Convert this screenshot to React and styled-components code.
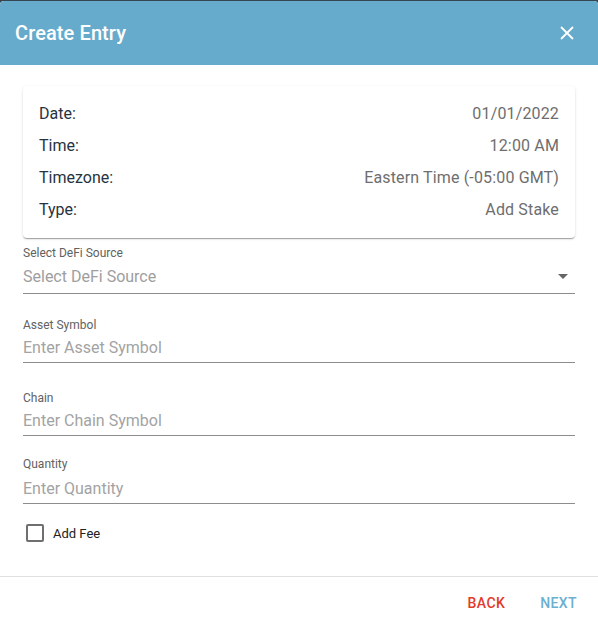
import React, { useState } from "react";
import styled, { createGlobalStyle } from "styled-components";

const GlobalStyle = createGlobalStyle`
  body {
    margin: 0;
    background: #36454f;
    font-family: Roboto, "Liberation Sans", sans-serif;
  }
`;

const details = [
  { label: "Date:", value: "01/01/2022" },
  { label: "Time:", value: "12:00 AM" },
  { label: "Timezone:", value: "Eastern Time (-05:00 GMT)" },
  { label: "Type:", value: "Add Stake" },
];

const fields = [
  { label: "Asset Symbol", placeholder: "Enter Asset Symbol", top: 24, h: 31 },
  { label: "Chain", placeholder: "Enter Chain Symbol", top: 28, h: 31 },
  { label: "Quantity", placeholder: "Enter Quantity", top: 21, h: 33 },
];

const App = () => {
  const [fee, setFee] = useState(false);

  return (
    <>
      <GlobalStyle />
      <Dialog>
        <Header>
          <h2>Create Entry</h2>
          <CloseButton aria-label="close">
            <svg width="16" height="16" viewBox="0 0 16 16">
              <path d="M2 2L14 14M14 2L2 14" stroke="#fff" strokeWidth="1.8" />
            </svg>
          </CloseButton>
        </Header>

        <Body>
          <SummaryCard>
            {details.map((d) => (
              <SummaryRow key={d.label}>
                <span className="label">{d.label}</span>
                <span className="value">{d.value}</span>
              </SummaryRow>
            ))}
          </SummaryCard>

          <Field top={8}>
            <FieldLabel>Select DeFi Source</FieldLabel>
            <SelectBox>
              <span>Select DeFi Source</span>
              <svg width="10" height="5" viewBox="0 0 10 5">
                <path d="M0 0L10 0L5 5Z" fill="#666" />
              </svg>
            </SelectBox>
          </Field>

          {fields.map((f) => (
            <Field key={f.label} top={f.top}>
              <FieldLabel>{f.label}</FieldLabel>
              <TextInput h={f.h} placeholder={f.placeholder} />
            </Field>
          ))}

          <CheckRow onClick={() => setFee(!fee)}>
            <CheckBox checked={fee} />
            <span>Add Fee</span>
          </CheckRow>
        </Body>

        <Footer>
          <ActionButton color="#e23b2b">BACK</ActionButton>
          <ActionButton color="#6ab0d0">NEXT</ActionButton>
        </Footer>
      </Dialog>
    </>
  );
};

const Dialog = styled.div`
  margin-top: 1px;
  height: 628px;
  background: #ffffff;
  border-radius: 4px 4px 0 0;
  overflow: hidden;
  display: flex;
  flex-direction: column;
`;

const Header = styled.div`
  height: 64px;
  flex-shrink: 0;
  background: #66abcb;
  display: flex;
  align-items: center;
  justify-content: space-between;
  padding: 0 23px 0 15px;
  h2 {
    margin: 0;
    color: #ffffff;
    font-size: 20px;
    font-weight: 500;
    letter-spacing: 0.1px;
  }
`;

const CloseButton = styled.button`
  border: none;
  background: none;
  padding: 0;
  display: flex;
  cursor: pointer;
`;

const Body = styled.div`
  flex: 1;
  padding: 21px 23px 0;
`;

const SummaryCard = styled.div`
  border-radius: 4px;
  padding: 16px;
  display: flex;
  flex-direction: column;
  gap: 8px;
  box-shadow: 0px 2px 1px -1px rgba(0, 0, 0, 0.2),
    0px 1px 1px 0px rgba(0, 0, 0, 0.14), 0px 1px 3px 0px rgba(0, 0, 0, 0.12);
`;

const SummaryRow = styled.div`
  display: flex;
  justify-content: space-between;
  font-size: 16px;
  line-height: 24px;
  .label {
    color: #263340;
  }
  .value {
    color: #6e6e6e;
    letter-spacing: 0.15px;
  }
`;

const Field = styled.div`
  margin-top: ${(p) => p.top}px;
  display: flex;
  flex-direction: column;
`;

const FieldLabel = styled.label`
  font-size: 12px;
  line-height: 14px;
  color: #616161;
`;

const SelectBox = styled.div`
  height: 34px;
  border-bottom: 1px solid #8d8d8d;
  display: flex;
  align-items: center;
  justify-content: space-between;
  padding: 0 7px 1px 0;
  box-sizing: border-box;
  font-size: 16px;
  color: #9e9e9e;
`;

const TextInput = styled.input`
  height: ${(p) => p.h}px;
  border: none;
  border-bottom: 1px solid #8d8d8d;
  padding: ${(p) => p.h - 31}px 0 0;
  box-sizing: border-box;
  outline: none;
  font-family: inherit;
  font-size: 16px;
  color: #333;
  background: transparent;
  &::placeholder {
    color: #a3a3a3;
  }
`;

const CheckRow = styled.div`
  margin-top: 20px;
  display: flex;
  align-items: center;
  gap: 9px;
  padding-left: 3px;
  font-size: 13px;
  color: #222;
  cursor: pointer;
`;

const CheckBox = styled.span`
  width: 14px;
  height: 14px;
  border: 2px solid #6f6f6f;
  border-radius: 2px;
  background: ${(p) => (p.checked ? "#66abcb" : "transparent")};
`;

const Footer = styled.div`
  height: 52px;
  flex-shrink: 0;
  border-top: 1px solid #e0e0e0;
  display: flex;
  align-items: center;
  justify-content: flex-end;
  gap: 35px;
  padding: 0 21px 0 0;
`;

const ActionButton = styled.button`
  border: none;
  background: none;
  padding: 0;
  font-family: inherit;
  font-size: 14px;
  font-weight: 500;
  letter-spacing: 0.4px;
  color: ${(p) => p.color};
  cursor: pointer;
`;

export default App;
